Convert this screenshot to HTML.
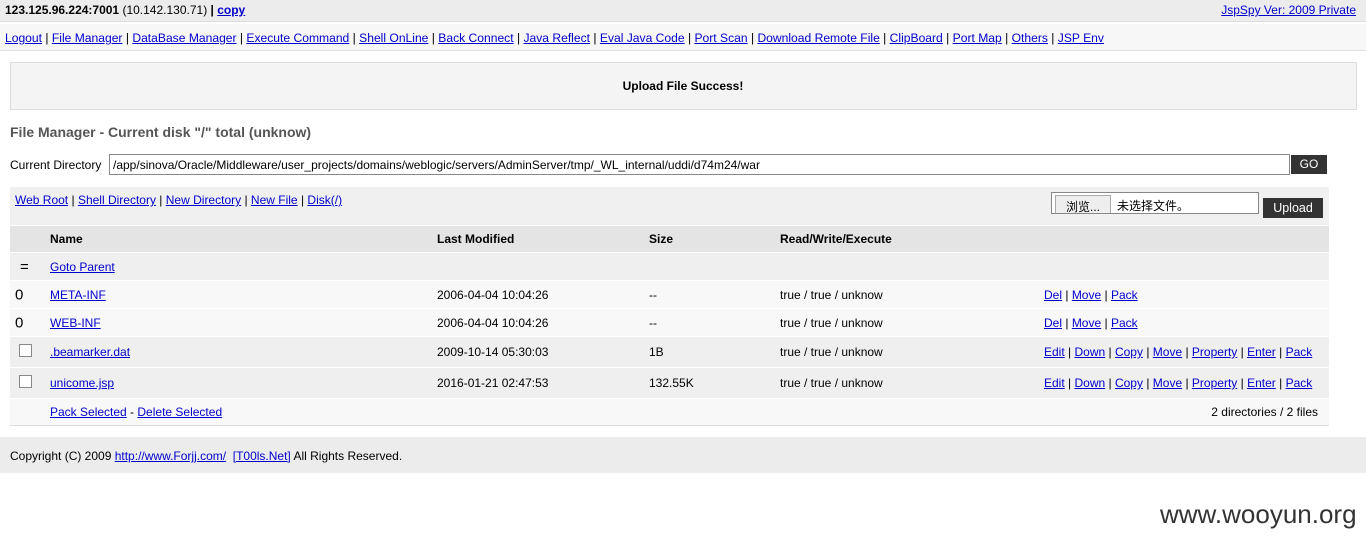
<!DOCTYPE html>
<html><head><meta charset="utf-8"><style>
body{margin:0;width:1366px;height:542px;background:#fff;font-family:"Liberation Sans","Noto Sans CJK SC",sans-serif;font-size:12px;color:#000;position:relative;overflow:hidden}
a{color:#00c;text-decoration:underline}
.abs{position:absolute}
.row{position:absolute;left:10px;width:1319px;border-bottom:1px solid #fff}
.row span{position:absolute;top:50%;transform:translateY(-50%);white-space:nowrap}
.cb{display:inline-block;width:11px;height:11px;border:1px solid #888;background:#fff}
</style></head><body>
<div class="abs" style="left:0;top:0;width:1366px;height:21px;background:#ececec;border-bottom:1px solid #ddd"></div>
<div class="abs" style="left:5px;top:3px;font-weight:bold">123.125.96.224:7001 <span style="font-weight:normal">(10.142.130.71)</span> | <a href="#">copy</a></div>
<div class="abs" style="right:10px;top:3px"><a href="#">JspSpy Ver: 2009 Private</a></div>
<div class="abs" style="left:0;top:24px;width:1366px;height:26px;background:#f7f7f7;border-bottom:1px solid #e0e0e0"></div>
<div class="abs" style="left:5px;top:31px;font-size:12.1px;white-space:nowrap"><a href="#">Logout</a> | <a href="#">File Manager</a> | <a href="#">DataBase Manager</a> | <a href="#">Execute Command</a> | <a href="#">Shell OnLine</a> | <a href="#">Back Connect</a> | <a href="#">Java Reflect</a> | <a href="#">Eval Java Code</a> | <a href="#">Port Scan</a> | <a href="#">Download Remote File</a> | <a href="#">ClipBoard</a> | <a href="#">Port Map</a> | <a href="#">Others</a> | <a href="#">JSP Env</a></div>
<div class="abs" style="left:10px;top:62px;width:1345px;height:46px;background:#f4f4f4;border:1px solid #ddd"></div>
<div class="abs" style="left:0;width:1366px;top:79px;text-align:center;font-weight:bold">Upload File Success!</div>
<div class="abs" style="left:10px;top:124px;font-size:14px;font-weight:bold;color:#555">File Manager - Current disk "/" total (unknow)</div>
<div class="abs" style="left:10px;top:158px">Current Directory</div>
<div class="abs" style="left:109px;top:154px;width:1179px;height:19px;border:1px solid #888;background:#fff;box-sizing:content-box"><span style="position:absolute;left:3px;top:3px">/app/sinova/Oracle/Middleware/user_projects/domains/weblogic/servers/AdminServer/tmp/_WL_internal/uddi/d74m24/war</span></div>
<div class="abs" style="left:1291px;top:155px;width:36px;height:19px;background:#333;color:#fff;text-align:center;line-height:19px">GO</div>
<div class="abs" style="left:10px;top:187px;width:1319px;height:38px;background:#f0f0f0"></div>
<div class="abs" style="left:15px;top:193px"><a href="#">Web Root</a> | <a href="#">Shell Directory</a> | <a href="#">New Directory</a> | <a href="#">New File</a> | <a href="#">Disk(/)</a></div>
<div class="abs" style="left:1051px;top:192px;width:206px;height:20px;border:1px solid #888;background:#fff;overflow:hidden">
<div class="abs" style="left:3px;top:2px;width:54px;height:20px;background:#eee;border:1px solid #aaa;text-align:center;line-height:22px">浏览...</div>
<div class="abs" style="left:65px;top:6px;line-height:14px">未选择文件。</div>
</div>
<div class="abs" style="left:1263px;top:198px;width:60px;height:20px;background:#333;color:#fff;text-align:center;line-height:20px;font-size:12.5px">Upload</div>

<div class="row" style="top:226px;height:26px;background:#e4e4e4;font-weight:bold"><span style="left:40px">Name</span><span style="left:427px">Last Modified</span><span style="left:639px">Size</span><span style="left:770px">Read/Write/Execute</span></div>
<div class="row" style="top:253px;height:27px;background:#efefef"><span style="left:10px;font-size:15px">=</span><span style="left:40px"><a href="#">Goto Parent</a></span></div>
<div class="row" style="top:281px;height:27px;background:#f8f8f8"><span style="left:5px;font-size:15px">0</span><span style="left:40px"><a href="#">META-INF</a></span><span style="left:427px">2006-04-04 10:04:26</span><span style="left:639px">--</span><span style="left:770px">true / true / unknow</span><span style="left:1034px"><a href="#">Del</a> | <a href="#">Move</a> | <a href="#">Pack</a></span></div>
<div class="row" style="top:309px;height:27px;background:#f8f8f8"><span style="left:5px;font-size:15px">0</span><span style="left:40px"><a href="#">WEB-INF</a></span><span style="left:427px">2006-04-04 10:04:26</span><span style="left:639px">--</span><span style="left:770px">true / true / unknow</span><span style="left:1034px"><a href="#">Del</a> | <a href="#">Move</a> | <a href="#">Pack</a></span></div>
<div class="row" style="top:337px;height:30px;background:#efefef"><span style="left:9px"><i class="cb"></i></span><span style="left:40px"><a href="#">.beamarker.dat</a></span><span style="left:427px">2009-10-14 05:30:03</span><span style="left:639px">1B</span><span style="left:770px">true / true / unknow</span><span style="left:1034px"><a href="#">Edit</a> | <a href="#">Down</a> | <a href="#">Copy</a> | <a href="#">Move</a> | <a href="#">Property</a> | <a href="#">Enter</a> | <a href="#">Pack</a></span></div>
<div class="row" style="top:368px;height:30px;background:#efefef"><span style="left:9px"><i class="cb"></i></span><span style="left:40px"><a href="#">unicome.jsp</a></span><span style="left:427px">2016-01-21 02:47:53</span><span style="left:639px">132.55K</span><span style="left:770px">true / true / unknow</span><span style="left:1034px"><a href="#">Edit</a> | <a href="#">Down</a> | <a href="#">Copy</a> | <a href="#">Move</a> | <a href="#">Property</a> | <a href="#">Enter</a> | <a href="#">Pack</a></span></div>
<div class="row" style="top:399px;height:26px;background:#f8f8f8;border-bottom:1px solid #ddd"><span style="left:40px"><a href="#">Pack Selected</a> - <a href="#">Delete Selected</a></span><span style="right:11px">2 directories / 2 files</span></div>

<div class="abs" style="left:0;top:437px;width:1366px;height:36px;background:#ececec"></div>
<div class="abs" style="left:10px;top:449px">Copyright (C) 2009 <a href="#">http://www.Forjj.com/</a> &nbsp;<a href="#">[T00ls.Net]</a> All Rights Reserved.</div>
<div class="abs" style="left:1160px;top:499px;font-size:26px;color:#333">www.wooyun.org</div>
</body></html>
